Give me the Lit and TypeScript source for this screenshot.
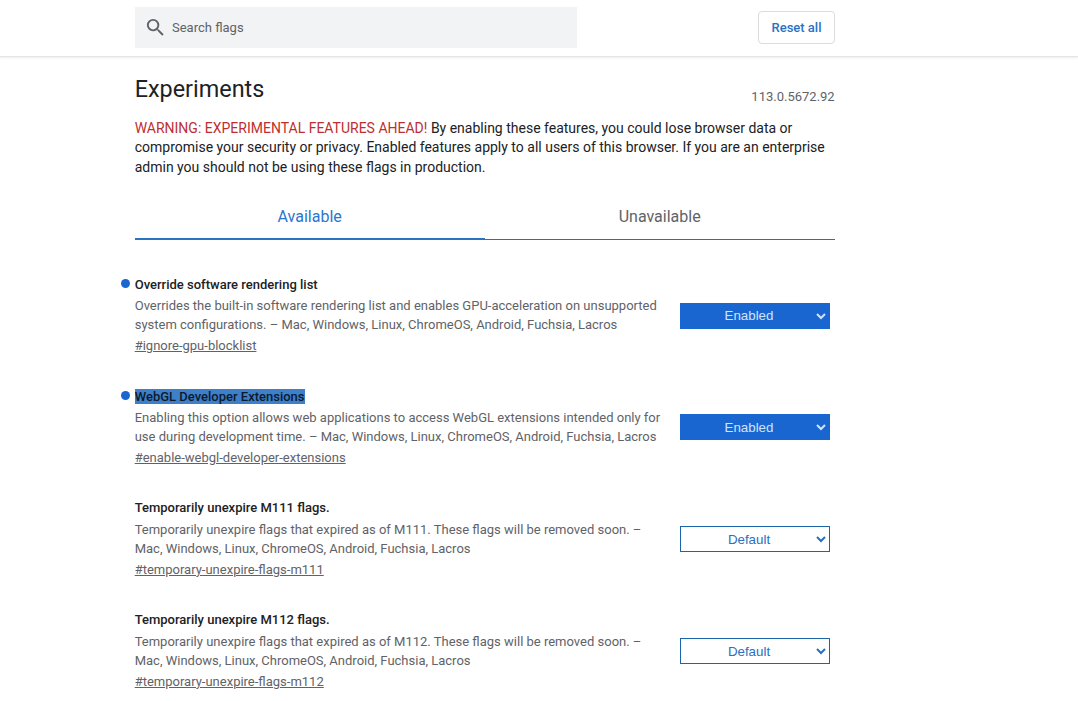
import { LitElement, html, css } from "lit";
import { customElement } from "lit/decorators.js";

interface Flag {
  title: string;
  desc: string;
  link: string;
  value: "Enabled" | "Default";
  marked?: boolean;
  selected?: boolean;
}

const FLAGS: Flag[] = [
  {
    title: "Override software rendering list",
    desc: "Overrides the built-in software rendering list and enables GPU-acceleration on unsupported system configurations. – Mac, Windows, Linux, ChromeOS, Android, Fuchsia, Lacros",
    link: "#ignore-gpu-blocklist",
    value: "Enabled",
    marked: true,
  },
  {
    title: "WebGL Developer Extensions",
    desc: "Enabling this option allows web applications to access WebGL extensions intended only for use during development time. – Mac, Windows, Linux, ChromeOS, Android, Fuchsia, Lacros",
    link: "#enable-webgl-developer-extensions",
    value: "Enabled",
    marked: true,
    selected: true,
  },
  {
    title: "Temporarily unexpire M111 flags.",
    desc: "Temporarily unexpire flags that expired as of M111. These flags will be removed soon. – Mac, Windows, Linux, ChromeOS, Android, Fuchsia, Lacros",
    link: "#temporary-unexpire-flags-m111",
    value: "Default",
  },
  {
    title: "Temporarily unexpire M112 flags.",
    desc: "Temporarily unexpire flags that expired as of M112. These flags will be removed soon. – Mac, Windows, Linux, ChromeOS, Android, Fuchsia, Lacros",
    link: "#temporary-unexpire-flags-m112",
    value: "Default",
  },
];

@customElement("app-root")
export class AppRoot extends LitElement {
  static styles = css`
    :host {
      display: block;
      height: 701px;
      overflow: hidden;
      background: #fff;
      font-family: Roboto, "Liberation Sans", sans-serif;
      color: #202124;
    }
    .header {
      height: 57px;
      box-sizing: border-box;
      padding: 7px 243px 0 135px;
      display: flex;
      justify-content: space-between;
      align-items: flex-start;
      border-bottom: 1px solid #e4e5e7;
      box-shadow: 0 1px 2px rgba(60, 64, 67, 0.1);
    }
    .search {
      width: 442px;
      height: 41px;
      background: #f1f3f4;
      display: flex;
      align-items: center;
      padding-left: 9px;
      box-sizing: border-box;
      gap: 5px;
      font-size: 13px;
      color: #5f6368;
    }
    .search svg {
      width: 23px;
      height: 23px;
      display: block;
    }
    .reset {
      margin-top: 4px;
      width: 77px;
      height: 33px;
      box-sizing: border-box;
      border: 1px solid #dadce0;
      border-radius: 4px;
      background: #fff;
      color: #2a72c4;
      font: 500 13px Roboto, sans-serif;
      padding: 0;
    }
    .main {
      width: 700px;
      margin-left: 134.7px;
    }
    .top {
      display: flex;
      justify-content: space-between;
      padding-top: 16px;
    }
    h1 {
      margin: 0;
      font-size: 23.4px;
      font-weight: 400;
      line-height: 32px;
    }
    .version {
      font-size: 13px;
      color: #5f6368;
      padding-top: 16px;
      line-height: 15px;
    }
    .warning {
      margin: 13.9px 0 0;
      font-size: 14px;
      line-height: 19.5px;
    }
    .warning b {
      font-weight: 400;
      color: #bd2f2f;
    }
    .tabs {
      display: grid;
      grid-template-columns: 1fr 1fr;
      margin-top: 10.6px;
    }
    .tab {
      height: 52px;
      box-sizing: border-box;
      font-size: 16px;
      text-align: center;
      padding-top: 19px;
      line-height: 19px;
      color: #5f6368;
      border-bottom: 1px solid #5f6368;
    }
    .tab.active {
      color: #2a76cc;
      border-bottom: 2px solid #2a73c0;
    }
    .flags {
      padding-top: 35.29px;
    }
    .flag {
      position: relative;
      height: 111.6px;
      display: flex;
      justify-content: space-between;
    }
    .dot {
      position: absolute;
      left: -14px;
      top: 4px;
      width: 9px;
      height: 9px;
      border-radius: 50%;
      background: #1a66d0;
    }
    .text {
      width: 530px;
      font-size: 13px;
      line-height: 19px;
      color: #5f6368;
    }
    .title {
      font-weight: 500;
      color: #202124;
      line-height: 19px;
      margin-bottom: 2.15px;
    }
    .flag:last-child .title {
      margin-bottom: 2.6px;
    }
    .title span.sel {
      background: #3d7fc9;
      color: #0d1a2b;
    }
    .link {
      display: block;
      margin-top: 2px;
      color: #5f6368;
      text-decoration: underline;
    }
    .control {
      width: 154.7px;
      padding-top: 27.6px;
    }
    .flag:last-child .control {
      padding-top: 28px;
    }
    select {
      display: block;
      width: 150px;
      height: 26px;
      box-sizing: border-box;
      font: 13.33px "Liberation Sans", Arial, sans-serif;
      text-align: center;
      text-align-last: center;
      border: 1px solid #1a66a8;
      border-radius: 0;
      background: #fff;
      color: #2a6fc0;
    }
    select.on {
      background: #1a66d0;
      border-color: #1a66d0;
      color: #cfe4fb;
    }
  `;

  render() {
    return html`
      <div class="header">
        <div class="search">
          <svg viewBox="0 0 24 24" fill="#5f6368">
            <path d="M15.5 14h-.79l-.28-.27A6.47 6.47 0 0 0 16 9.5 6.5 6.5 0 1 0 9.5 16c1.61 0 3.09-.59 4.23-1.57l.27.28v.79l5 4.99L20.49 19l-4.99-5zm-6 0C7.01 14 5 11.99 5 9.5S7.01 5 9.5 5 14 7.01 14 9.5 11.99 14 9.5 14z"></path>
          </svg>
          <span>Search flags</span>
        </div>
        <button class="reset">Reset all</button>
      </div>
      <div class="main">
        <div class="top">
          <h1>Experiments</h1>
          <div class="version">113.0.5672.92</div>
        </div>
        <p class="warning">
          <b>WARNING: EXPERIMENTAL FEATURES AHEAD!</b> By enabling these features, you could lose browser data or compromise your security or privacy. Enabled features apply to all users of this browser. If you are an enterprise admin you should not be using these flags in production.
        </p>
        <div class="tabs">
          <div class="tab active">Available</div>
          <div class="tab">Unavailable</div>
        </div>
        <div class="flags">
          ${FLAGS.map(
            (f) => html`
              <div class="flag">
                ${f.marked ? html`<span class="dot"></span>` : null}
                <div class="text">
                  <div class="title"><span class=${f.selected ? "sel" : ""}>${f.title}</span></div>
                  <div>${f.desc}</div>
                  <a class="link">${f.link}</a>
                </div>
                <div class="control">
                  <select class=${f.value === "Enabled" ? "on" : ""}>
                    <option>${f.value}</option>
                  </select>
                </div>
              </div>
            `
          )}
        </div>
      </div>
    `;
  }
}
